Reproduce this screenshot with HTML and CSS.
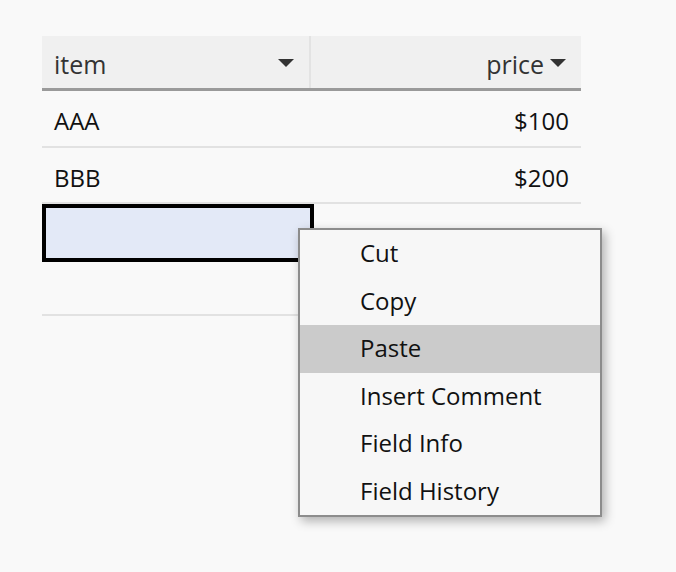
FILE: index.html
```html
<!DOCTYPE html>
<html>
<head>
<meta charset="utf-8">
<link rel="stylesheet" href="styles.css">
</head>
<body>
<div class="page">
  <div class="grid">
    <div class="head">
      <div class="hcell hcell-first"><span>item</span><span class="arrow"></span></div>
      <div class="hcell hcell-right"><span>price</span><span class="arrow"></span></div>
    </div>
    <div class="row">
      <div class="cell">AAA</div>
      <div class="cell cell-right">$100</div>
    </div>
    <div class="row row-2">
      <div class="cell">BBB</div>
      <div class="cell cell-right">$200</div>
    </div>
    <div class="row-tall">
      <div class="selected"></div>
    </div>
  </div>
  <ul class="menu">
    <li class="menu-item">Cut</li>
    <li class="menu-item">Copy</li>
    <li class="menu-item active">Paste</li>
    <li class="menu-item">Insert Comment</li>
    <li class="menu-item">Field Info</li>
    <li class="menu-item">Field History</li>
  </ul>
</div>
</body>
</html>
```
FILE: styles.css
```css
html, body {
  margin: 0;
  padding: 0;
  background: #f9f9f9;
}
body {
  font-family: "Open Sans", "Noto Sans", sans-serif;
  font-size: 24px;
  color: #111;
}
.page {
  position: relative;
  width: 676px;
  height: 572px;
  padding: 36px 0 0 42px;
  box-sizing: border-box;
}
.grid {
  width: 539px;
}
.head {
  display: grid;
  grid-template-columns: 269px 270px;
  height: 52px;
  background: #f0f0f0;
  border-bottom: 3px solid #9a9a9a;
}
.hcell {
  display: flex;
  align-items: center;
  color: #333;
  font-size: 25px;
  padding: 4px 15px 0 12px;
}
.hcell-first {
  justify-content: space-between;
  border-right: 2px solid #e3e3e3;
}
.hcell-right {
  justify-content: flex-end;
  gap: 6px;
}
.arrow {
  width: 0;
  height: 0;
  border-left: 8px solid transparent;
  border-right: 8px solid transparent;
  border-top: 8px solid #333;
  margin-top: -2px;
}
.row {
  display: grid;
  grid-template-columns: 269px 270px;
  height: 55px;
  border-bottom: 2px solid #e2e2e2;
}
.row-2 {
  height: 54px;
}
.cell {
  display: flex;
  align-items: center;
  padding: 4px 12px 0;
}
.cell-right {
  justify-content: flex-end;
  padding-right: 12px;
}
.row-tall {
  height: 110px;
  border-bottom: 2px solid #e2e2e2;
}
.selected {
  width: 272px;
  height: 58px;
  box-sizing: border-box;
  border: 4px solid #000;
  background: #e3e9f7;
}
.menu {
  position: absolute;
  left: 298px;
  top: 228px;
  width: 304px;
  margin: 0;
  padding: 0;
  list-style: none;
  box-sizing: border-box;
  border: 2px solid #8c8c8c;
  background: #f7f7f7;
  box-shadow: 3px 4px 10px rgba(0, 0, 0, 0.3);
}
.menu-item {
  height: 47.5px;
  display: flex;
  align-items: center;
  padding-left: 60px;
  padding-bottom: 2px;
  box-sizing: border-box;
  color: #111;
}
.menu-item.active {
  background: #cbcbcb;
}
```
